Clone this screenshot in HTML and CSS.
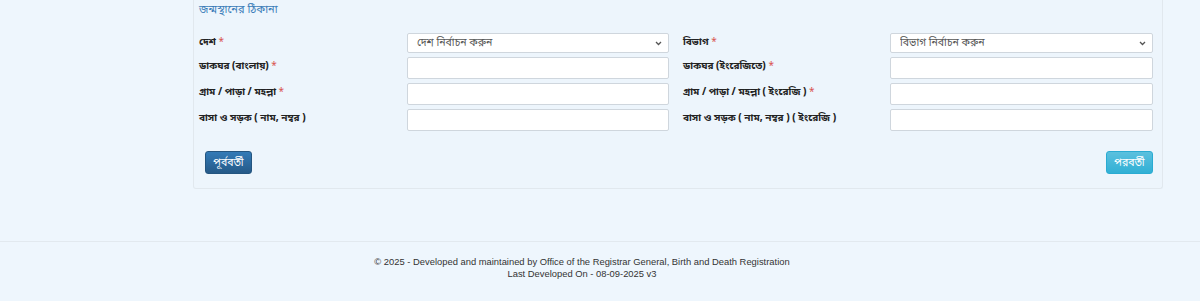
FILE: index.html
```html
<!DOCTYPE html>
<html lang="bn">
<head>
<meta charset="utf-8">
<title>জন্মস্থানের ঠিকানা</title>
<link rel="stylesheet" href="styles.css">
</head>
<body>
<div class="layout">
  <div class="main">
    <section class="panel">
      <h3 class="panel-title">জন্মস্থানের ঠিকানা</h3>
      <div class="form-grid">
        <label class="lbl">দেশ <span class="req">*</span></label>
        <div class="ctl"><select class="field select"><option>দেশ নির্বাচন করুন</option></select></div>
        <label class="lbl lbl2">বিভাগ <span class="req">*</span></label>
        <div class="ctl"><select class="field select"><option>বিভাগ নির্বাচন করুন</option></select></div>

        <label class="lbl">ডাকঘর (বাংলায়) <span class="req">*</span></label>
        <div class="ctl"><input class="field" type="text"></div>
        <label class="lbl lbl2">ডাকঘর (ইংরেজিতে) <span class="req">*</span></label>
        <div class="ctl"><input class="field" type="text"></div>

        <label class="lbl">গ্রাম / পাড়া / মহল্লা <span class="req">*</span></label>
        <div class="ctl"><input class="field" type="text"></div>
        <label class="lbl lbl2">গ্রাম / পাড়া / মহল্লা ( ইংরেজি ) <span class="req">*</span></label>
        <div class="ctl"><input class="field" type="text"></div>

        <label class="lbl">বাসা ও সড়ক ( নাম, নম্বর )</label>
        <div class="ctl"><input class="field" type="text"></div>
        <label class="lbl lbl2">বাসা ও সড়ক ( নাম, নম্বর ) ( ইংরেজি )</label>
        <div class="ctl"><input class="field" type="text"></div>
      </div>
      <div class="actions">
        <button class="btn btn-prev" type="button">পূর্ববর্তী</button>
        <button class="btn btn-next" type="button">পরবর্তী</button>
      </div>
    </section>
  </div>
</div>
<footer class="footer">
  <p class="footer-line">© 2025 - Developed and maintained by Office of the Registrar General, Birth and Death Registration</p>
  <p class="footer-line">Last Developed On - 08-09-2025 v3</p>
</footer>
</body>
</html>
```
FILE: styles.css
```css
* { box-sizing: border-box; }
html, body {
  margin: 0;
  padding: 0;
  background: #eef6fd;
  font-family: "Noto Sans Bengali", "Liberation Sans", Arial, sans-serif;
  color: #222;
}
.layout {
  padding-left: 193px;
  padding-right: 37px;
  height: 241px;
}
.main { width: 970px; }
.panel {
  background: #edf5fc;
  border: 1px solid #e1e8ee;
  border-top: none;
  border-radius: 0 0 3px 3px;
  padding: 3px 9px 14px 5px;
  height: 189px;
}
.panel-title {
  margin: 0 0 16px 0;
  font-size: 11px;
  font-weight: normal;
  color: #3a7cb8;
  line-height: 14px;
}
.form-grid {
  display: grid;
  grid-template-columns: 208px 262px 221px 263px;
  grid-template-rows: 20px 22px 22px 22px;
  row-gap: 4px;
  align-items: center;
}
.lbl {
  font-size: 10px;
  font-weight: bold;
  color: #222;
  align-self: start;
  padding-top: 3px;
  line-height: 14px;
  white-space: nowrap;
}
.lbl2 { padding-left: 14px; }
.req { color: #d9534f; font-weight: normal; }
.ctl { height: 100%; }
.field {
  display: block;
  width: 100%;
  height: 100%;
  margin: 0;
  background: #fff;
  border: 1px solid #cfd6dd;
  border-radius: 2px;
  font-family: inherit;
  font-size: 10.5px;
  color: #555;
  padding: 0 8px;
  outline: none;
}
.select {
  appearance: none;
  -webkit-appearance: none;
  padding-left: 9px;
  background-color: #fff;
  background-image: url("data:image/svg+xml;utf8,<svg xmlns='http://www.w3.org/2000/svg' width='7' height='5' viewBox='0 0 7 5'><path d='M1 1 L3.5 3.5 L6 1' fill='none' stroke='%23555' stroke-width='1.3'/></svg>");
  background-repeat: no-repeat;
  background-position: right 6px center;
}
.actions {
  display: flex;
  justify-content: space-between;
  align-items: center;
  margin-top: 20px;
  padding-left: 6px;
}
.btn {
  height: 23px;
  width: 47px;
  padding: 0;
  border-radius: 3px;
  font-family: inherit;
  font-size: 10.5px;
  color: #fff;
  cursor: pointer;
}
.btn-prev {
  background: linear-gradient(#337ab7, #265a88);
  border: 1px solid #245580;
}
.btn-next {
  background: linear-gradient(#5bc0de, #31b0d5);
  border: 1px solid #2aabd2;
}
.footer {
  border-top: 1px solid #e2e9ef;
  padding: 14px 36px 0 0;
  text-align: center;
}
.footer-line {
  margin: 0;
  font-family: "Liberation Sans", Arial, sans-serif;
  font-size: 9.4px;
  line-height: 12px;
  color: #333;
}
```
